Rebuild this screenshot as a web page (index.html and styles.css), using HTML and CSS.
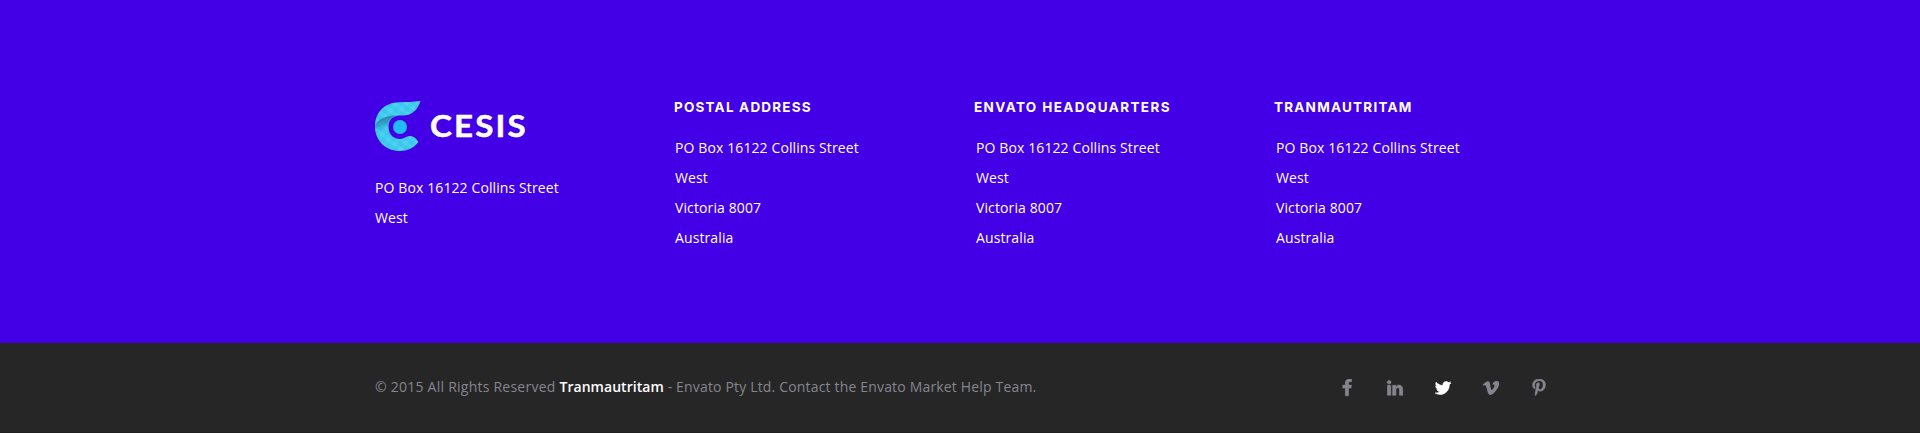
FILE: index.html
```html
<!DOCTYPE html>
<html lang="en">
<head>
<meta charset="utf-8">
<title>Cesis</title>
<link rel="stylesheet" href="styles.css">
</head>
<body>
<footer class="footer">
  <div class="footer-main">
    <section class="col col-brand">
      <a class="logo" aria-label="Cesis">
        <svg class="logo-mark" viewBox="0 0 46 50" width="46" height="50">
          <defs>
            <linearGradient id="shade" gradientUnits="userSpaceOnUse" x1="6" y1="16" x2="11" y2="30">
              <stop offset="0" stop-color="#1f6f9c" stop-opacity=".85"/>
              <stop offset="0.5" stop-color="#2a8fba" stop-opacity=".65"/>
              <stop offset="1" stop-color="#3fcdf0" stop-opacity="0"/>
            </linearGradient>
            <pattern id="weave" width="8" height="8" patternUnits="userSpaceOnUse" patternTransform="rotate(38)">
              <rect width="8" height="8" fill="#3fcdf0"/>
              <rect width="4" height="8" fill="#55d5f2" opacity=".7"/>
              <rect width="8" height="4" fill="#35c0ea" opacity=".5"/>
            </pattern>
          </defs>
          <path fill="url(#weave)" d="M45.500 0C43 8 38 14 29 14.500H24C17 15 13 20 13.500 27C14 34 19 38 25 38C29 38 31 35 35 35C38.500 35 41 37 43.500 41C39 47 32 50 25 50C11 50 0 40 0 25.500C0 11 10 1.500 24 1.200C32 1 38 1 45.500 0Z"/>
          <path fill="url(#shade)" d="M0 25C3 18 11 13.500 29 14.500H24C17 15 13 20 13.500 27L15 32H1Z"/>
          <circle cx="25" cy="26" r="7" fill="#1fbcfb"/>
        </svg>
        <span class="logo-name">CESIS</span>
      </a>
      <p class="address">PO Box 16122 Collins Street<br>West</p>
    </section>
    <section class="col">
      <h2 class="title title-postal">Postal Address</h2>
      <p class="address">PO Box 16122 Collins Street<br>West<br>Victoria 8007<br>Australia</p>
    </section>
    <section class="col col-indent">
      <h2 class="title title-envato">Envato Headquarters</h2>
      <p class="address">PO Box 16122 Collins Street<br>West<br>Victoria 8007<br>Australia</p>
    </section>
    <section class="col col-indent">
      <h2 class="title title-tran">Tranmautritam</h2>
      <p class="address">PO Box 16122 Collins Street<br>West<br>Victoria 8007<br>Australia</p>
    </section>
  </div>
  <div class="footer-bar">
    <div class="bar-inner">
      <p class="copyright">© 2015 All Rights Reserved <strong class="author">Tranmautritam</strong><span class="company"> - Envato Pty Ltd. Contact the Envato Market Help Team.</span></p>
      <nav class="social">
        <a class="social-link" aria-label="Facebook"><svg class="icon icon-bold" viewBox="0 0 1792 1792"><path d="M1343 12v264h-157q-86 0-116 36t-30 108v189h293l-39 296h-254v759h-306v-759h-255v-296h255v-218q0-186 104-288.500t277-102.500q147 0 228 12z"/></svg></a>
        <a class="social-link" aria-label="LinkedIn"><svg class="icon icon-bold" viewBox="0 0 1792 1792"><path d="M477 625v991h-330v-991h330zm21-306q1 73-50.500 122t-135.500 49h-2q-82 0-132-49t-50-122q0-74 51.500-122.500t134.500-48.500 133 48.500 51 122.500zm1166 729v568h-329v-530q0-105-40.500-164.500t-126.500-59.500q-63 0-105.500 34.500t-63.500 85.500q-11 30-11 81v553h-329q2-399 2-647t-1-296l-1-48h329v144h-2q20-32 41-56t56.500-52 87-43.500 114.500-15.500q171 0 275 113.500t104 332.500z"/></svg></a>
        <a class="social-link active" aria-label="Twitter"><svg class="icon icon-bold" viewBox="0 0 1792 1792"><path d="M1684 408q-67 98-162 167 1 14 1 42 0 130-38 259.500t-115.500 248.500-184.500 210.500-258 146-323 54.500q-271 0-496-145 35 4 78 4 225 0 401-138-105-2-188-64.500t-114-159.500q33 5 61 5 43 0 85-11-112-23-185.500-111.500t-73.500-205.500v-4q68 38 146 41-66-44-105-115t-39-154q0-88 44-163 121 149 294.500 238.500t371.500 99.500q-8-38-8-74 0-134 94.500-228.500t228.500-94.500q140 0 236 102 109-21 205-78-37 115-142 178 93-10 186-50z"/></svg></a>
        <a class="social-link" aria-label="Vimeo"><svg class="icon" viewBox="0 0 1792 1792"><path d="M1709 518q-10 236-332 651-333 431-562 431-142 0-240-263-44-160-132-482-72-262-157-262-18 0-127 76l-77-98q24-21 108-96.500t130-115.500q156-138 241-146 95-9 153 55.500t81 203.500q44 287 66 373 55 249 120 249 51 0 154-161 101-161 109-246 13-139-109-139-57 0-121 26 120-393 459-382 251 8 236 326z"/></svg></a>
        <a class="social-link" aria-label="Pinterest"><svg class="icon icon-bold" viewBox="0 0 1792 1792"><path d="M256 597q0-108 37.500-203.500t103.500-166.500 152-123 185-78 202-26q158 0 294 66.500t221 193.500 85 287q0 96-19 188t-60 177-100 149.500-145 103-189 38.500q-68 0-135-32t-96-88q-10 39-28 112.500t-23.500 95-20.500 71-26 71-32 62.500-46 77.500-62 86.500l-14 5-9-10q-15-157-15-188 0-92 21.500-206.500t66.500-287.500 52-203q-32-65-32-169 0-83 52-156t132-73q61 0 95 40.500t34 102.500q0 66-44 191t-44 187q0 63 45 104.500t109 41.500q55 0 102-25t78.500-68 56-95 38-110.500 20-111 6.500-99.500q0-173-109.500-269.500t-285.500-96.500q-200 0-334 129.500t-134 328.500q0 44 12.500 85t27 65 27 45.500 12.500 30.500q0 28-15 73t-37 45q-2 0-17-3-51-15-90.500-56t-61-94.500-32.500-108-11-106.500z"/></svg></a>
      </nav>
    </div>
  </div>
</footer>
</body>
</html>
```
FILE: styles.css
```css
* { box-sizing: border-box; }
body {
  margin: 0;
  background: #262626;
  font-family: "Open Sans", "Noto Sans", sans-serif;
  font-size: 14px;
}
p, h2 { margin: 0; }
.footer { height: 433px; display: flex; flex-direction: column; }
.footer-main {
  height: 343px;
  padding: 100px 345px 0 375px;
  display: grid;
  grid-template-columns: repeat(4, 300px);
  background: #4300e6;
}
.logo { display: flex; height: 52px; margin-bottom: 21px; padding-top: 1px; }
.logo-name {
  margin-left: 8.700px;
  color: #fff;
  font: 700 30.500px/48px Lato, sans-serif;
  letter-spacing: 2px;
  transform: scaleX(1.085);
  transform-origin: left center;
  -webkit-text-stroke: 0.500px #fff;
}
.title {
  height: 33px;
  margin-left: -1px;
  color: #fff;
  font: 700 13.500px/14px Inter, sans-serif;
  text-transform: uppercase;
  white-space: nowrap;
}
.title-postal { letter-spacing: 1.200px; }
.title-envato { letter-spacing: 1.380px; }
.title-tran { letter-spacing: 1.220px; }
.address { color: #fff; line-height: 30px; letter-spacing: 0.110px; }
.col-indent .address { padding-left: 1px; }
.footer-bar { height: 90px; background: #262626; border-bottom: 1px solid #1f1f1f; }
.bar-inner {
  height: 89px;
  padding: 0 372px 0 375px;
  display: flex;
  align-items: center;
  justify-content: space-between;
}
.copyright { padding-bottom: 2px; color: #85858f; white-space: nowrap; letter-spacing: 0.240px; }
.author { color: #fff; font-weight: 600; letter-spacing: 0.040px; }
.company { letter-spacing: 0.170px; }
.social { display: flex; gap: 30px; }
.social-link { display: flex; width: 18px; height: 18px; color: #85858f; }
.social-link.active { color: #fff; }
.icon { width: 18px; height: 18px; fill: currentColor; }
.icon-bold { stroke: currentColor; stroke-width: 60; }
```
